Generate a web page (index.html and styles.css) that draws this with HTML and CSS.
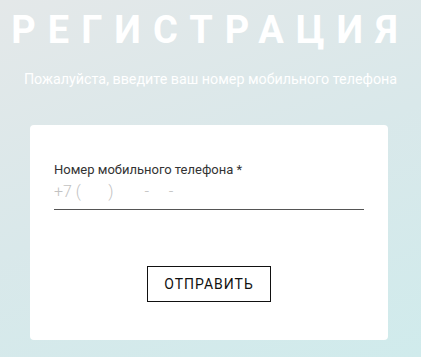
FILE: index.html
```html
<!DOCTYPE html>
<html lang="ru">
<head>
    <meta charset="UTF-8">
    <meta name="viewport" content="width=device-width, initial-scale=1.0">
    <title>Регистрация</title>
    <link rel="stylesheet" href="styles.css">
</head>
<body>
    <div class="page">
        <h1 class="title">Регистрация</h1>
        <p class="subtitle">Пожалуйста, введите ваш номер мобильного телефона</p>

        <!-- Phone form -->
        <div class="card">
            <div class="field">
                <label for="phone">Номер мобильного телефона *</label>
                <input type="tel" id="phone" placeholder="+7 (&nbsp;&nbsp;&nbsp;&nbsp;&nbsp;&nbsp;&nbsp;)&nbsp;&nbsp;&nbsp;&nbsp;&nbsp;&nbsp;&nbsp;&nbsp;-&nbsp;&nbsp;&nbsp;&nbsp;&nbsp;-">
            </div>
            <div class="actions">
                <button class="submit-button">Отправить</button>
            </div>
        </div>
    </div>
</body>
</html>
```

FILE: styles.css
```css
body {
    margin: 0;
    font-family: Roboto, "Liberation Sans", sans-serif;
    background: linear-gradient(160deg, #e4e8e9 0%, #d9e8ea 50%, #d0ebec 100%);
    min-height: 357px;
}

.page {
    padding-top: 8px;
}

.title {
    margin: 0;
    text-align: center;
    color: #fff;
    font-size: 38px;
    font-weight: 700;
    line-height: 44px;
    letter-spacing: 12px;
    text-transform: uppercase;
}

.subtitle {
    margin: 19px 0 0;
    text-align: center;
    color: #fff;
    font-size: 14.3px;
    line-height: 16px;
}

.card {
    width: 358px;
    margin: 38px 0 0 30px;
    box-sizing: border-box;
    padding: 37px 24px 38px;
    background: #fff;
    border-radius: 4px;
}

.field {
    display: flex;
    flex-direction: column;
}

.field label {
    font-size: 13px;
    line-height: 16px;
    color: #333;
}

.field input {
    border: none;
    border-bottom: 1px solid #555;
    padding: 4px 0 7px;
    font-family: inherit;
    font-size: 16px;
    font-weight: 300;
    line-height: 20px;
    color: #333;
    outline: none;
}

.field input::placeholder {
    color: #c2c2c2;
}

.actions {
    display: flex;
    justify-content: center;
    margin-top: 56px;
}

.submit-button {
    width: 124px;
    height: 36px;
    background: #fff;
    border: 1px solid #111;
    border-radius: 0;
    font-family: inherit;
    font-size: 14px;
    font-weight: 400;
    letter-spacing: 1px;
    text-transform: uppercase;
    color: #111;
    cursor: pointer;
}
```
